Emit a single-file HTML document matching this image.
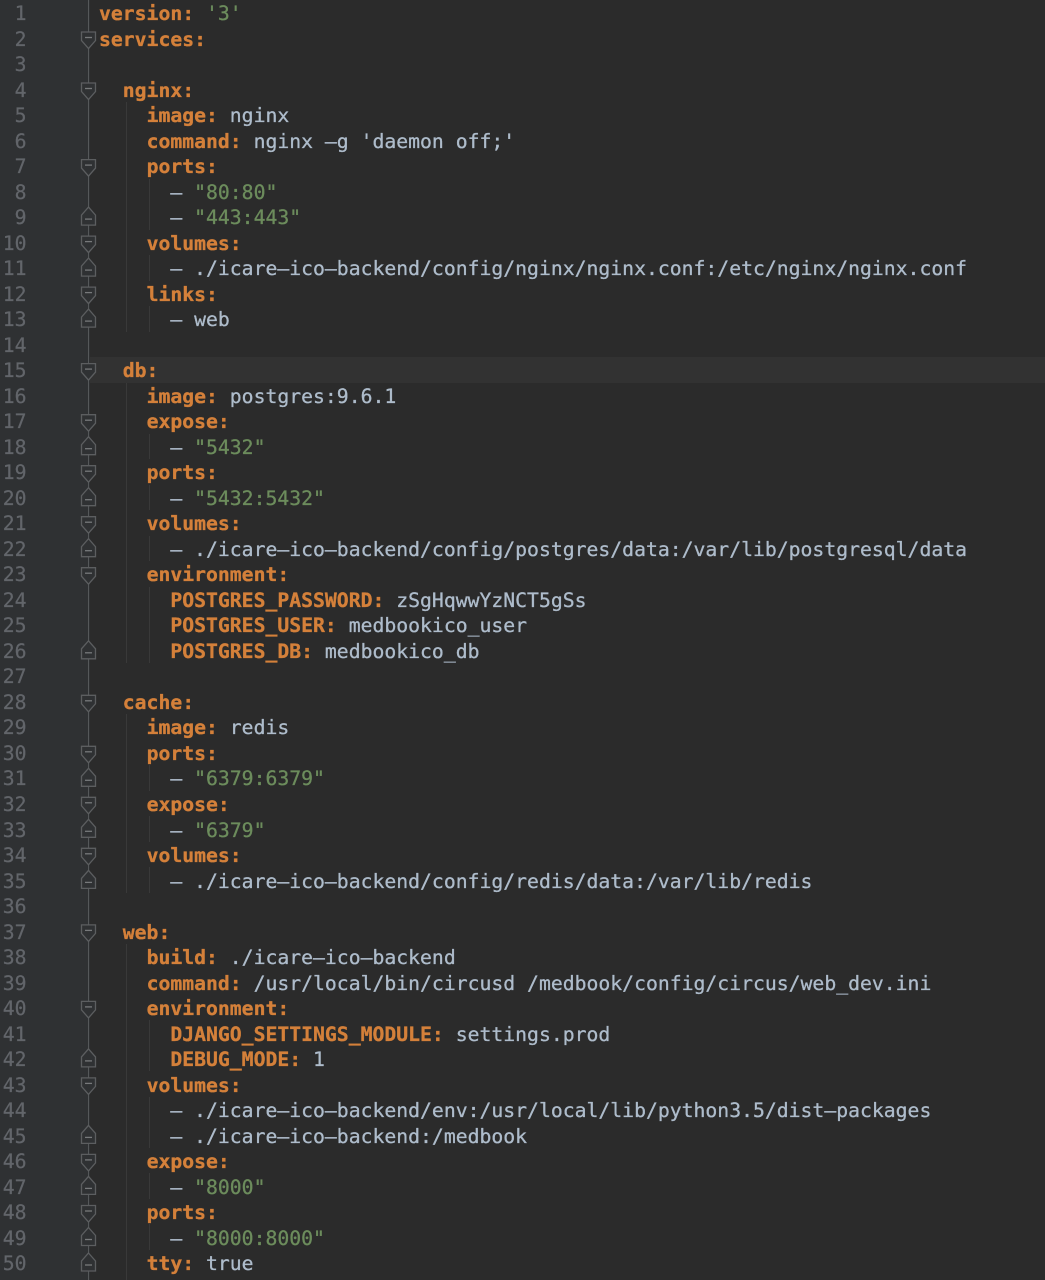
<!DOCTYPE html>
<html><head><meta charset="utf-8"><style>
html,body{margin:0;padding:0;background:#2b2b2b;}
#r{position:relative;width:1045px;height:1280px;overflow:hidden;background:#2b2b2b;}
#g{position:absolute;left:0;top:0;width:90px;height:1280px;background:#2f3133;}
#c{position:absolute;left:90px;top:357px;width:955px;height:25.5px;background:#323232;}
svg{position:absolute;left:0;top:0;}
pre{position:absolute;top:1px;margin:0;font-family:"DejaVu Sans Mono","Liberation Mono",monospace;font-size:19.75px;line-height:25.51px;filter:blur(0.35px);}
#n{left:0;width:26.5px;text-align:right;color:#62656a;-webkit-text-stroke:0.25px #62656a;}
#t{left:99px;color:#aebccb;-webkit-text-stroke:0.3px #aebccb;}
b{color:#d4803a;font-weight:bold;-webkit-text-stroke:0.3px #d4803a;}
i{color:#6c8c5c;font-style:normal;-webkit-text-stroke:0.3px #6c8c5c;}
</style></head><body><div id="r"><div id="g"></div><div id="c"></div>
<svg width="1045" height="1280" fill="none">
<defs>
<g id="o"><path d="M81.5 6.5H95.5V15L88.5 23L81.5 15Z" fill="#2f3133" stroke="#5c5e60" stroke-width="1.3"/><path d="M85 12H92" stroke="#77797b" stroke-width="1.3"/></g>
<g id="e"><path d="M88.5 3L95.5 11V21H81.5V11Z" fill="#2f3133" stroke="#5c5e60" stroke-width="1.3"/><path d="M85 15H92" stroke="#77797b" stroke-width="1.3"/></g>
</defs>
<path d="M88.5 0V1280" stroke="#55585a"/>
<path d="M126.5 102V332M126.5 383V663M126.5 714V893M126.5 944V1280M149.5 179V230M149.5 255V281M149.5 306V332M149.5 434V459M149.5 485V510M149.5 536V561M149.5 587V663M149.5 765V791M149.5 816V842M149.5 867V893M149.5 1020V1071M149.5 1097V1148M149.5 1173V1199M149.5 1224V1250" stroke="#393939"/>
<use href="#o" y="25.5"/><use href="#o" y="76.5"/><use href="#o" y="153.1"/><use href="#e" y="204.1"/><use href="#o" y="229.6"/><use href="#e" y="255.1"/><use href="#o" y="280.6"/><use href="#e" y="306.1"/>
<use href="#o" y="357.1"/><use href="#o" y="408.2"/><use href="#e" y="433.7"/><use href="#o" y="459.2"/><use href="#e" y="484.7"/><use href="#o" y="510.2"/><use href="#e" y="535.7"/><use href="#o" y="561.2"/><use href="#e" y="637.8"/>
<use href="#o" y="688.8"/><use href="#o" y="739.8"/><use href="#e" y="765.3"/><use href="#o" y="790.8"/><use href="#e" y="816.3"/><use href="#o" y="841.8"/><use href="#e" y="867.4"/>
<use href="#o" y="918.4"/><use href="#o" y="994.9"/><use href="#e" y="1045.9"/><use href="#o" y="1071.4"/><use href="#e" y="1122.4"/><use href="#o" y="1147.9"/><use href="#e" y="1173.4"/><use href="#o" y="1199"/><use href="#e" y="1224.5"/><use href="#e" y="1250"/>
</svg>
<pre id="n">1
2
3
4
5
6
7
8
9
10
11
12
13
14
15
16
17
18
19
20
21
22
23
24
25
26
27
28
29
30
31
32
33
34
35
36
37
38
39
40
41
42
43
44
45
46
47
48
49
50</pre>
<pre id="t"><b>version:</b> <i>'3'</i>
<b>services:</b>

  <b>nginx:</b>
    <b>image:</b> nginx
    <b>command:</b> nginx –g 'daemon off;'
    <b>ports:</b>
      – <i>"80:80"</i>
      – <i>"443:443"</i>
    <b>volumes:</b>
      – ./icare–ico–backend/config/nginx/nginx.conf:/etc/nginx/nginx.conf
    <b>links:</b>
      – web

  <b>db:</b>
    <b>image:</b> postgres:9.6.1
    <b>expose:</b>
      – <i>"5432"</i>
    <b>ports:</b>
      – <i>"5432:5432"</i>
    <b>volumes:</b>
      – ./icare–ico–backend/config/postgres/data:/var/lib/postgresql/data
    <b>environment:</b>
      <b>POSTGRES_PASSWORD:</b> zSgHqwwYzNCT5gSs
      <b>POSTGRES_USER:</b> medbookico_user
      <b>POSTGRES_DB:</b> medbookico_db

  <b>cache:</b>
    <b>image:</b> redis
    <b>ports:</b>
      – <i>"6379:6379"</i>
    <b>expose:</b>
      – <i>"6379"</i>
    <b>volumes:</b>
      – ./icare–ico–backend/config/redis/data:/var/lib/redis

  <b>web:</b>
    <b>build:</b> ./icare–ico–backend
    <b>command:</b> /usr/local/bin/circusd /medbook/config/circus/web_dev.ini
    <b>environment:</b>
      <b>DJANGO_SETTINGS_MODULE:</b> settings.prod
      <b>DEBUG_MODE:</b> 1
    <b>volumes:</b>
      – ./icare–ico–backend/env:/usr/local/lib/python3.5/dist–packages
      – ./icare–ico–backend:/medbook
    <b>expose:</b>
      – <i>"8000"</i>
    <b>ports:</b>
      – <i>"8000:8000"</i>
    <b>tty:</b> true</pre>
</div></body></html>
